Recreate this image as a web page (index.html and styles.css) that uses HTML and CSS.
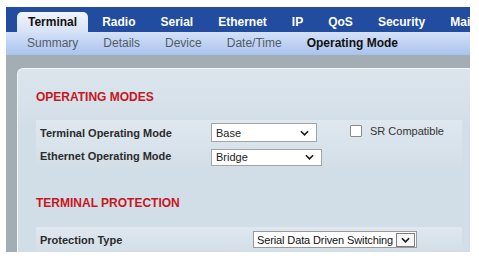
FILE: index.html
```html
<!DOCTYPE html>
<html lang="en">
<head>
    <meta charset="UTF-8">
    <title>Terminal - Operating Mode</title>
    <link rel="stylesheet" href="styles.css">
</head>
<body>
<div class="frame">
    <ul class="tabs">
        <li class="active">Terminal</li>
        <li>Radio</li>
        <li>Serial</li>
        <li>Ethernet</li>
        <li>IP</li>
        <li>QoS</li>
        <li>Security</li>
        <li>Maintenance</li>
    </ul>
    <ul class="subnav">
        <li>Summary</li>
        <li>Details</li>
        <li>Device</li>
        <li>Date/Time</li>
        <li class="current">Operating Mode</li>
    </ul>
    <div class="content">
        <div class="panel">
            <h2 class="section">OPERATING MODES</h2>
            <div class="fields">
                <div class="row">
                    <label>Terminal Operating Mode</label>
                    <div class="select select-base">
                        <span>Base</span>
                        <svg width="9" height="6" viewBox="0 0 10 6"><polyline points="1,1 5,5 9,1" fill="none" stroke="#1a1a1a" stroke-width="1.8"/></svg>
                    </div>
                    <span class="check"></span>
                    <span class="check-label">SR Compatible</span>
                </div>
                <div class="row">
                    <label>Ethernet Operating Mode</label>
                    <div class="select select-bridge">
                        <span>Bridge</span>
                        <svg width="9" height="6" viewBox="0 0 10 6"><polyline points="1,1 5,5 9,1" fill="none" stroke="#1a1a1a" stroke-width="1.8"/></svg>
                    </div>
                </div>
            </div>

            <h2 class="section section-gap">TERMINAL PROTECTION</h2>
            <div class="fields fields-gap">
                <div class="row">
                    <label class="label-wide">Protection Type</label>
                    <div class="select select-classic">
                        <span class="value">Serial Data Driven Switching</span>
                        <span class="drop-btn">
                            <svg width="9" height="6" viewBox="0 0 10 6"><polyline points="1,1 5,5 9,1" fill="none" stroke="#1a1a1a" stroke-width="1.8"/></svg>
                        </span>
                    </div>
                </div>
            </div>
        </div>
    </div>
</div>
</body>
</html>
```

FILE: styles.css
```css
body {
    margin: 0;
    background-color: #ffffff;
    font-family: 'Liberation Sans', Arial, sans-serif;
    color: #333333;
}

.frame {
    margin: 7px 0 0 6px;
    width: 464px;
    height: 245px;
    overflow: hidden;
}

/* top tabs */
.tabs {
    list-style: none;
    margin: 0;
    padding: 0 0 0 11px;
    height: 25px;
    display: flex;
    align-items: flex-end;
    overflow: hidden;
    background-color: #214c9f;
    white-space: nowrap;
}

.tabs li {
    flex: none;
    padding: 0 12.5px;
    line-height: 20px;
    font-size: 12px;
    font-weight: bold;
    color: #ffffff;
}

.tabs li.active {
    padding: 0 11px;
    margin-right: 1.5px;
    color: #111111;
    border-radius: 5px 5px 0 0;
    background: linear-gradient(#f2f5fb, #d6e2f6);
}

/* sub navigation */
.subnav {
    list-style: none;
    margin: 0;
    padding: 0 0 0 8.5px;
    height: 23px;
    display: flex;
    background: linear-gradient(#d5e1f7, #a9c3ee);
    white-space: nowrap;
}

.subnav li {
    padding: 0 12.5px;
    line-height: 23px;
    font-size: 12px;
    color: #555b66;
}

.subnav li.current {
    font-weight: bold;
    color: #111111;
}

/* main area */
.content {
    background-color: #a3adb4;
    padding: 13px 0 0 11px;
}

.panel {
    min-height: 200px;
    padding: 21px 8px 0 18px;
    border: 1px solid #f1f5f8;
    border-right: 0;
    border-bottom: 0;
    border-radius: 6px 0 0 0;
    background: linear-gradient(#dce5ec, #d2dee7 60px);
}

.section {
    margin: 0;
    font-size: 12px;
    line-height: 14px;
    font-weight: bold;
    color: #c8161d;
}

.section-gap {
    margin-top: 29px;
}

.fields {
    margin-top: 16px;
    padding: 1px 0 0 4px;
    background: linear-gradient(#dfe8ef, #d3dee7);
}

.fields-gap {
    margin-top: 17px;
}

.row {
    display: flex;
    align-items: center;
    height: 23px;
}

.row label {
    width: 171px;
    font-size: 11px;
    font-weight: bold;
    color: #2b2b2b;
}

.row label.label-wide {
    width: 213px;
}

.select {
    box-sizing: border-box;
    display: flex;
    align-items: center;
    justify-content: space-between;
    border: 1px solid #a4a4a4;
    background-color: #ffffff;
    font-size: 11px;
    color: #222222;
    padding: 0 7px 0 4px;
    white-space: nowrap;
}

.select-base {
    width: 106px;
    height: 19px;
}

.select-bridge {
    width: 111px;
    height: 17px;
    margin-top: 3px;
}

.select-classic {
    width: 164px;
    height: 17px;
    padding: 0 1px 0 3px;
    border-color: #9a9a9a;
    color: #111111;
}

.select-classic .value {
    overflow: hidden;
    letter-spacing: -0.12px;
    margin-right: 2px;
}

.drop-btn {
    flex: none;
    box-sizing: border-box;
    width: 19px;
    height: 14px;
    display: flex;
    align-items: center;
    justify-content: center;
    border: 1px solid #7d7d7d;
    background-color: #f6f6f6;
}

.check {
    box-sizing: border-box;
    width: 12px;
    height: 12px;
    margin-left: 33px;
    margin-top: -4px;
    border: 1px solid #8a8a8a;
    border-radius: 1px;
    background-color: #ffffff;
}

.check-label {
    margin-left: 8px;
    margin-top: -4px;
    font-size: 11px;
    color: #333333;
}
```
